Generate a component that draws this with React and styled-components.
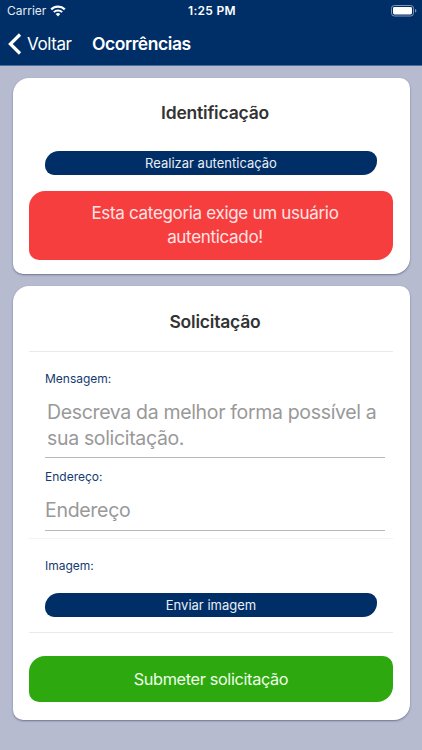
import styled, { createGlobalStyle } from "styled-components";

function App() {
  return (
    <Screen>
      <GlobalStyle />
      <StatusBar>
        <Carrier>
          Carrier
          <WifiIcon />
        </Carrier>
        <Clock>1:25 PM</Clock>
        <BatteryIcon />
      </StatusBar>
      <NavBar>
        <BackButton>
          <ChevronIcon />
          Voltar
        </BackButton>
        <NavTitle>Ocorrências</NavTitle>
      </NavBar>
      <Content>
        <Card height={196} top={22}>
          <CardTitle>Identificação</CardTitle>
          <SmallButton top={27}>Realizar autenticação</SmallButton>
          <Alert>
            Esta categoria exige um usuário
            <br />
            autenticado!
          </Alert>
        </Card>
        <Card height={434} top={23}>
          <CardTitle>Solicitação</CardTitle>
          <Divider top={18} />
          <Label top={18}>Mensagem:</Label>
          <MessageField>
            Descreva da melhor forma possível a
            <br />
            sua solicitação.
          </MessageField>
          <Label top={10}>Endereço:</Label>
          <AddressField>Endereço</AddressField>
          <Divider top={7} light />
          <Label top={18}>Imagem:</Label>
          <SmallButton top={18}>Enviar imagem</SmallButton>
          <Divider top={15} />
          <SubmitButton>Submeter solicitação</SubmitButton>
        </Card>
      </Content>
    </Screen>
  );
}

function WifiIcon() {
  return (
    <svg width="16" height="12" viewBox="0 0 16 12" fill="none">
      <path d="M1.2 4.4a9.7 9.7 0 0 1 13.6 0" stroke="#fff" strokeWidth="2.2" />
      <path d="M3.8 7.1a6 6 0 0 1 8.4 0" stroke="#fff" strokeWidth="2" />
      <path d="M8 11.4 5.7 9.1a3.3 3.3 0 0 1 4.6 0z" fill="#fff" />
    </svg>
  );
}

function BatteryIcon() {
  return (
    <svg width="26" height="12" viewBox="0 0 26 12" fill="none">
      <rect
        x="0.5"
        y="0.5"
        width="22"
        height="10.5"
        rx="2.8"
        stroke="#8096b4"
      />
      <rect x="2" y="2" width="19" height="7.5" rx="1.4" fill="#fff" />
      <path d="M24 4v3.6c1-.3 1.4-1 1.4-1.8S25 4.3 24 4z" fill="#8096b4" />
    </svg>
  );
}

function ChevronIcon() {
  return (
    <svg width="14" height="22" viewBox="0 0 14 22" fill="none">
      <path d="M12 1.500 2.400 11 12 20.500" stroke="#fff" strokeWidth="3.200" />
    </svg>
  );
}

export default App;

const GlobalStyle = createGlobalStyle`
  * {
    box-sizing: border-box;
  }
  body {
    margin: 0;
    background: #b6bbd0;
    font-family: Inter, "Liberation Sans", sans-serif;
  }
`;
const Screen = styled.div`
  width: 100%;
  height: 750px;
  overflow: hidden;
  background: #b6bbd0;
`;
const StatusBar = styled.div`
  height: 22px;
  padding: 0 5px 0 7px;
  display: grid;
  grid-template-columns: 1fr auto 1fr;
  align-items: center;
  background: #002e67;
  color: #fff;
  > svg {
    justify-self: end;
  }
`;
const Carrier = styled.div`
  display: flex;
  align-items: center;
  gap: 4px;
  font-size: 12px;
  line-height: 22px;
  color: #e4eaf2;
`;
const Clock = styled.div`
  font-size: 12px;
  font-weight: 600;
  line-height: 22px;
  letter-spacing: 0.3px;
`;
const NavBar = styled.div`
  height: 44px;
  padding-left: 8px;
  display: flex;
  align-items: center;
  background: #002e67;
  border-bottom: 1px solid #4c6ba3;
  color: #fff;
`;
const BackButton = styled.div`
  width: 84px;
  display: flex;
  align-items: center;
  gap: 5px;
  font-size: 17px;
  letter-spacing: -0.4px;
`;
const NavTitle = styled.div`
  font-size: 17.5px;
  font-weight: 600;
  letter-spacing: -0.43px;
`;
const Content = styled.div`
  padding: 12px 12.5px;
  display: flex;
  flex-direction: column;
  gap: 12px;
`;
const Card = styled.div`
  height: ${(p) => p.height}px;
  padding: ${(p) => p.top}px 16.5px 0;
  background: #fff;
  border-radius: 16px 10px 16px 10px;
  box-shadow: 0 1px 2px rgba(40, 45, 80, 0.5);
`;
const CardTitle = styled.div`
  padding-left: 8px;
  font-size: 17.5px;
  font-weight: 600;
  line-height: 25px;
  margin-bottom: -1px;
  letter-spacing: -0.2px;
  text-align: center;
  color: #333;
`;
const SmallButton = styled.div`
  height: 24px;
  margin: ${(p) => p.top}px 16px 0;
  background: #002e67;
  border-radius: 14px 9px 14px 9px;
  color: #e8eef7;
  font-size: 13px;
  line-height: 25px;
  text-align: center;
`;
const Alert = styled.div`
  height: 69px;
  margin-top: 16px;
  padding: 11px 0 0 8px;
  background: #f73e3f;
  border-radius: 16px 10px 16px 10px;
  color: #ffe4e4;
  font-size: 17px;
  line-height: 23.5px;
  letter-spacing: -0.32px;
  text-align: center;
`;
const Divider = styled.div`
  height: 1px;
  margin-top: ${(p) => p.top}px;
  background: ${(p) => (p.light ? "#f3f3f3" : "#e9e9e9")};
`;
const Label = styled.div`
  margin: ${(p) => p.top}px 16px 0;
  font-size: 12px;
  line-height: 18px;
  color: #143a70;
`;
const MessageField = styled.div`
  height: 70px;
  margin: 0 8px 0 16px;
  padding: 11px 0 0 2px;
  border-bottom: 1px solid #b8b8b8;
  color: #999;
  font-size: 19.5px;
  line-height: 26px;
  letter-spacing: -0.34px;
  white-space: nowrap;
`;
const AddressField = styled.div`
  height: 45px;
  margin: 0 8px 0 16px;
  padding-top: 11px;
  border-bottom: 1px solid #b8b8b8;
  color: #999;
  font-size: 19.5px;
  line-height: 26px;
  letter-spacing: -0.3px;
`;
const SubmitButton = styled.div`
  height: 46px;
  margin-top: 23px;
  background: #2da90f;
  border-radius: 16px 10px 16px 10px;
  color: #edffe9;
  font-size: 16.3px;
  line-height: 46px;
  letter-spacing: -0.35px;
  text-align: center;
`;
